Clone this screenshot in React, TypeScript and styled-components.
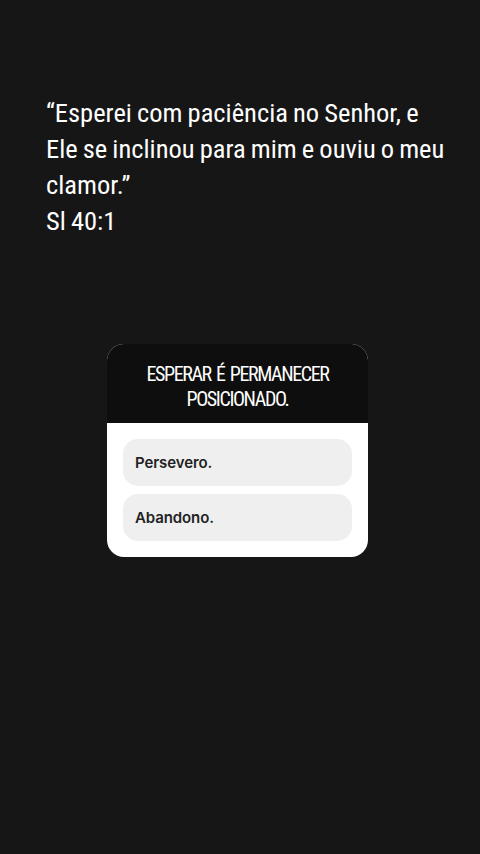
import React from "react";
import styled, { createGlobalStyle } from "styled-components";

const Global = createGlobalStyle`
  html, body { margin: 0; padding: 0; background: #161616; }
  #root { min-height: 854px; }
`;

const Page = styled.div`
  width: 480px;
  height: 854px;
  background: #161616;
  display: flex;
  flex-direction: column;
  box-sizing: border-box;
  padding: 95px 0 0 46px;
`;

const Quote = styled.p`
  margin: 0;
  color: #ffffff;
  font-family: "Roboto Condensed", Roboto, sans-serif;
  font-stretch: 75%;
  font-size: 26.5px;
  line-height: 36px;
  word-spacing: -1px;
  white-space: nowrap;
`;

const Card = styled.div`
  margin: 105px 0 0 61px;
  width: 261px;
  border-radius: 17px;
  overflow: hidden;
  background: #ffffff;
  display: flex;
  flex-direction: column;
`;

const Header = styled.div`
  background: #0e0e0e;
  height: 79px;
  display: flex;
  align-items: center;
  justify-content: center;
  text-align: center;
  color: #ffffff;
  font-family: "Roboto Condensed", Roboto, sans-serif;
  font-stretch: 75%;
  font-size: 20px;
  line-height: 25px;
  letter-spacing: -1.4px;
  word-spacing: 2px;
  padding-top: 6px;
  box-sizing: border-box;
`;

const Options = styled.div`
  display: flex;
  flex-direction: column;
  gap: 8px;
  padding: 16px 16px 16px 16px;
`;

const Option = styled.div`
  height: 47px;
  border-radius: 15px;
  background: #efeff0;
  display: flex;
  align-items: center;
  padding-left: 12px;
  color: #222222;
  font-family: Inter, "Liberation Sans", sans-serif;
  font-weight: 600;
  font-size: 15px;
  letter-spacing: -0.1px;
`;

export default function App() {
  return (
    <>
      <Global />
      <Page>
        <Quote>
          “Esperei com paciência no Senhor, e
          <br />
          Ele se inclinou para mim e ouviu o meu
          <br />
          clamor.”
          <br />
          Sl 40:1
        </Quote>
        <Card>
          <Header>
            ESPERAR É PERMANECER
            <br />
            POSICIONADO.
          </Header>
          <Options>
            <Option>Persevero.</Option>
            <Option>Abandono.</Option>
          </Options>
        </Card>
      </Page>
    </>
  );
}
